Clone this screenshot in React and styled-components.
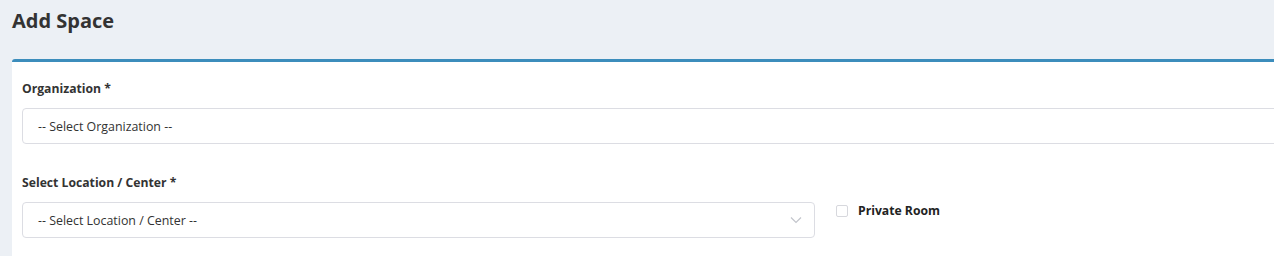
import React from "react";
import styled, { createGlobalStyle } from "styled-components";

const Global = createGlobalStyle`
  html, body { margin: 0; padding: 0; }
  body {
    background: #ecf0f5;
    font-family: "Open Sans", "Liberation Sans", sans-serif;
    color: #333;
    overflow: hidden;
    width: 1274px;
    height: 256px;
  }
`;

const Page = styled.div`
  padding: 0 0 0 12px;
`;

const Title = styled.h1`
  margin: 0;
  padding-top: 8px;
  height: 59px;
  box-sizing: border-box;
  font-size: 20px;
  line-height: 26px;
  font-weight: 700;
  color: #333;
`;

const Card = styled.div`
  width: 1300px;
  background: #fff;
  border-top: 3px solid #3c8dbc;
  border-radius: 3px 0 0 0;
  padding: 17px 10px 0 10px;
  box-sizing: border-box;
  height: 197px;
`;

const Group = styled.div`
  margin-bottom: ${(p) => p.$mb || 0}px;
`;

const Label = styled.label`
  display: block;
  font-size: 12.2px;
  line-height: 20px;
  font-weight: 700;
  color: #333;
  margin-bottom: 9px;
`;

const Row = styled.div`
  display: flex;
  align-items: flex-start;
  gap: 21px;
`;

const SelectBox = styled.div`
  position: relative;
  width: ${(p) => p.$w}px;
  height: 36px;
  box-sizing: border-box;
  border: 1px solid #dcdde3;
  border-radius: 4px;
  display: flex;
  align-items: center;
  padding-left: 15px;
  font-size: 12.4px;
  color: #333;
`;

const Chevron = styled.svg`
  position: absolute;
  right: 12px;
  top: 13px;
`;

const Check = styled.label`
  display: flex;
  align-items: center;
  gap: 10px;
  margin-top: 0;
  font-size: 12.2px;
  font-weight: 700;
  color: #222;
`;

const Box = styled.span`
  width: 12px;
  height: 12px;
  border: 1px solid #d7d8dd;
  border-radius: 2px;
  box-sizing: border-box;
  display: inline-block;
`;

export default function App() {
  return (
    <>
      <Global />
      <Page>
        <Title>Add Space</Title>
        <Card>
          <Group $mb={29}>
            <Label>Organization *</Label>
            <SelectBox $w={1290}>-- Select Organization --</SelectBox>
          </Group>
          <Group>
            <Label>Select Location / Center *</Label>
            <Row>
              <SelectBox $w={793}>
                -- Select Location / Center --
                <Chevron width="12" height="8" viewBox="0 0 12 8">
                  <path d="M1 1.5 L6 6.5 L11 1.5" fill="none" stroke="#c3c5cc" strokeWidth="1.2" />
                </Chevron>
              </SelectBox>
              <Check>
                <Box />
                Private Room
              </Check>
            </Row>
          </Group>
        </Card>
      </Page>
    </>
  );
}
